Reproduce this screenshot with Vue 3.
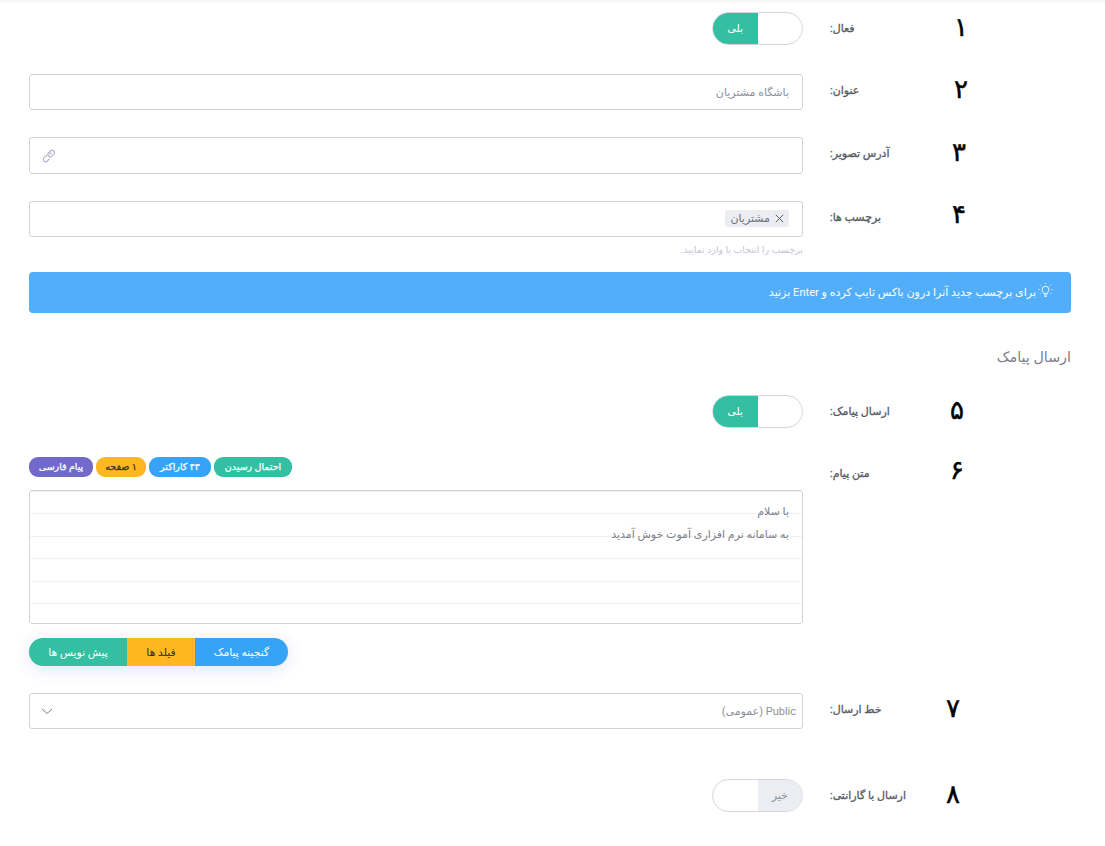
<script setup>
const badges = [
  { text: 'احتمال رسیدن', cls: 'green' },
  { text: '۴۳ کاراکتر', cls: 'blue' },
  { text: '۱ صفحه', cls: 'yellow' },
  { text: 'پیام فارسی', cls: 'purple' },
]
</script>

<template>
  <div class="page">
    <div class="topshade"></div>
    <section class="row r1">
      <div class="num n1">۱</div>
      <label class="lab">فعال:</label>
      <div class="field">
        <div class="toggle on"><span class="blank"></span><span class="state">بلی</span></div>
      </div>
    </section>
    <section class="row r2">
      <div class="num n2">۲</div>
      <label class="lab">عنوان:</label>
      <div class="field"><div class="input">باشگاه مشتریان</div></div>
    </section>
    <section class="row r3">
      <div class="num n3">۳</div>
      <label class="lab">آدرس تصویر:</label>
      <div class="field">
        <div class="input tall">
          <svg class="link" width="14" height="14" viewBox="0 0 14 14" fill="none" stroke="#b4b0c8" stroke-width="1.1">
            <path d="M6.500 4.200 8.600 2a2.300 2.300 0 0 1 3.300 3.300L9.700 7.400a2.300 2.300 0 0 1-3.200 0" />
            <path d="M7.500 9.800 5.400 12a2.300 2.300 0 0 1-3.300-3.300l2.200-2.100a2.300 2.300 0 0 1 3.200 0" />
            <path d="M5.500 4.500a2.300 2.300 0 0 1 3.300 0l.7.7" />
          </svg>
        </div>
      </div>
    </section>
    <section class="row r4">
      <div class="num n4">۴</div>
      <label class="lab">برچسب ها:</label>
      <div class="field">
        <div class="input">
          <span class="tag">
            <svg width="9" height="9" viewBox="0 0 9 9" fill="none" stroke="#5a5c66" stroke-width="1"><path d="M.8.800l7.400 7.400M8.200.800.800 8.200" /></svg>
            مشتریان
          </span>
        </div>
        <div class="help">برچسب را انتخاب یا وارد نمایید.</div>
      </div>
    </section>
    <div class="alert">
      <svg class="bulb" width="15" height="15" viewBox="0 0 15 15" fill="none" stroke="#fff" stroke-width="0.9">
        <path d="M5.600 10.600c0-1.500-1.500-2-1.500-4a3.400 3.400 0 0 1 6.800 0c0 2-1.500 2.500-1.500 4zM5.800 12h3.400M6.400 13.500h2.200M7.500 1V0M2.700 2.500l-.8-.8M12.300 2.500l.8-.8M1.500 6.500H.3M13.500 6.500h1.200M2.700 10l-.8.800M12.300 10l.8.800" />
      </svg>
      <span>برای برچسب جدید آنرا درون باکس تایپ کرده و Enter بزنید</span>
    </div>
    <h3 class="title">ارسال پیامک</h3>
    <section class="row r5">
      <div class="num n5">۵</div>
      <label class="lab">ارسال پیامک:</label>
      <div class="field">
        <div class="toggle on"><span class="blank"></span><span class="state">بلی</span></div>
      </div>
    </section>
    <section class="row r6">
      <div class="num n6">۶</div>
      <label class="lab">متن پیام:</label>
      <div class="field">
        <div class="badges">
          <span v-for="b in badges" :key="b.text" class="badge" :class="b.cls">{{ b.text }}</span>
        </div>
        <div class="area">
          <p>با سلام</p>
          <p>به سامانه نرم افزاری آموت خوش آمدید</p>
        </div>
        <div class="btns">
          <span class="btn blue">گنجینه پیامک</span>
          <span class="btn yellow">فیلد ها</span>
          <span class="btn green">پیش نویس ها</span>
        </div>
      </div>
    </section>
    <section class="row r7">
      <div class="num n7">۷</div>
      <label class="lab">خط ارسال:</label>
      <div class="field">
        <div class="input select">
          <span>Public (عمومی)</span>
          <svg width="12" height="7" viewBox="0 0 12 7" fill="none" stroke="#6f727d" stroke-width="0.9"><path d="M1 1l5 4.500L11 1" /></svg>
        </div>
      </div>
    </section>
    <section class="row r8">
      <div class="num n8">۸</div>
      <label class="lab">ارسال با گارانتی:</label>
      <div class="field">
        <div class="toggle off"><span class="state">خیر</span><span class="blank"></span></div>
      </div>
    </section>
  </div>
</template>

<style>
html, body { margin: 0; background: #fff; }
</style>

<style scoped>
.page {
  position: relative;
  direction: rtl;
  box-sizing: border-box;
  width: 1105px;
  height: 846px;
  overflow: hidden;
  padding: 12px 34px 0 29px;
  font-family: "Roboto", "DejaVu Sans", sans-serif;
  color: #575962;
  font-size: 11px;
}
.topshade {
  position: absolute;
  inset: 0 0 auto 0;
  height: 4px;
  background: linear-gradient(#f4f4f6, #fff);
}
.row { display: flex; align-items: flex-start; }
.r2 { margin-top: 29px; }
.r3 { margin-top: 27px; }
.r4 { margin-top: 27px; }
.r5 { margin-top: 29px; }
.r6 { margin-top: 29px; }
.r7 { margin-top: 27px; }
.r8 { margin-top: 50px; }
.num {
  flex: 1;
  text-align: left;
  color: #000;
  font-size: 26px;
  font-weight: 400;
  line-height: 30px;
  -webkit-text-stroke: 0.5px #000;
}
.n1, .n2 { padding-left: 24px; }
.n3, .n4 { padding-left: 22px; }
.n5, .n6 { padding-left: 20px; }
.n7, .n8 { padding-left: 16px; }
.n4, .n6 { margin-top: -2px; }
.lab {
  width: 100px;
  margin-left: 27px;
  display: flex;
  justify-content: flex-end;
  font-size: 11px;
  line-height: 33px;
  color: #575962;
  -webkit-text-stroke: 0.3px #575962;
}
.field { width: 774px; flex: none; }
.input {
  box-sizing: border-box;
  height: 36px;
  border: 1px solid #d2d3da;
  border-radius: 3px;
  padding: 0 13px;
  display: flex;
  align-items: center;
  color: #8d9099;
}
.tall { height: 37px; }
.link { margin-right: auto; margin-left: -1px; }
.toggle {
  box-sizing: border-box;
  width: 91px;
  height: 33px;
  margin-left: auto;
  border: 1px solid #d5d7df;
  border-radius: 17px;
  display: flex;
  overflow: hidden;
  font-size: 11px;
}
.toggle .blank { width: 45px; }
.state { width: 45px; display: flex; align-items: center; justify-content: center; }
.on .state { background: #34bfa3; color: #fff; }
.off .state { background: #ebedf2; color: #8d9099; }
.tag {
  display: inline-flex;
  align-items: center;
  height: 17px;
  padding: 0 5px;
  border-radius: 3px;
  background: #ebedf2;
  color: #6f727d;
  gap: 5px;
  margin-bottom: 2px;
}
.help {
  margin-top: 6px;
  color: #c4c5d6;
  font-size: 9.500px;
  line-height: 13px;
}
.alert {
  box-sizing: border-box;
  height: 41px;
  margin-top: 16px;
  padding: 0 18px;
  border-radius: 4px;
  background: #53aef9;
  color: #fff;
  font-size: 11.100px;
  display: flex;
  align-items: center;
  gap: 2px;
}
.bulb { flex: none; margin-bottom: 4px; }
.title {
  margin: 35px 0 0;
  font-size: 14.300px;
  font-weight: 400;
  line-height: 18px;
  color: #7b7e8a;
}
.badges { display: flex; justify-content: flex-end; gap: 3px; height: 20px; }
.badge {
  height: 20px;
  border-radius: 9px;
  font-size: 9.500px;
  line-height: 20px;
  text-align: center;
  -webkit-text-stroke: 0.25px currentColor;
}
.badge.green { width: 78px; }
.badge.blue { width: 62px; }
.badge.yellow { width: 50px; }
.badge.purple { width: 64px; }
.green { background: #34bfa3; color: #fff; }
.blue { background: #36a3f7; color: #fff; }
.yellow { background: #ffb822; color: #33302a; }
.purple { background: #716aca; color: #fff; }
.area {
  box-sizing: border-box;
  height: 134px;
  margin-top: 13px;
  padding: 9px 13px 0;
  border: 1px solid #d2d3da;
  border-radius: 3px;
  color: #7d8089;
  line-height: 23px;
  background: repeating-linear-gradient(#fff 0.800px, #fff 22.300px, #f1f1f4 22.300px, #f1f1f4 23.300px);
}
.area p { margin: 0; }
.btns {
  display: flex;
  justify-content: flex-start;
  width: 259px;
  height: 28px;
  margin: 14px auto 0 0;
  border-radius: 14px;
  overflow: hidden;
  box-shadow: 0 3px 16px rgba(80, 90, 200, 0.16);
}
.btn {
  display: flex;
  align-items: center;
  justify-content: center;
  font-size: 10.800px;
}
.btns .blue { width: 93px; }
.btns .yellow { width: 68px; }
.btns .green { width: 98px; }
.select { justify-content: space-between; padding-right: 6px; padding-left: 11px; }
</style>
